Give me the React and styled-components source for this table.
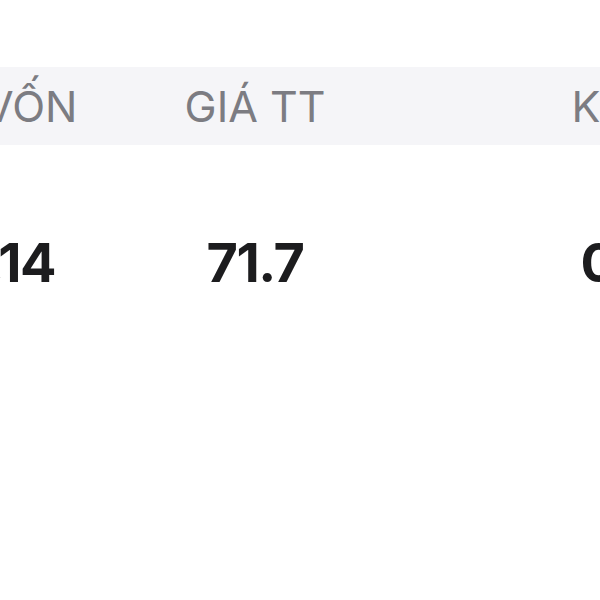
import React from "react";
import styled, { createGlobalStyle } from "styled-components";

const Global = createGlobalStyle`
  html, body { margin: 0; padding: 0; background: #ffffff; }
  body { font-family: Inter, "Noto Sans", sans-serif; }
`;

const Viewport = styled.div`
  width: 600px;
  height: 600px;
  overflow: hidden;
  background: #ffffff;
  padding-top: 67px;
  box-sizing: border-box;
`;

const Table = styled.div`
  margin-left: -152px;
  width: 966px;
  display: grid;
  grid-template-columns: 280px 254px 432px;
`;

const HeadCell = styled.div`
  background: #f5f5f8;
  height: 78px;
  display: flex;
  align-items: center;
  justify-content: center;
  font-size: 43px;
  font-weight: 400;
  color: #7c7c82;
  white-space: nowrap;
`;

const ValueCell = styled.div`
  height: 234px;
  display: flex;
  align-items: center;
  justify-content: center;
  font-size: 54px;
  font-weight: 700;
  color: #1c1c1e;
  letter-spacing: -1.5px;
  white-space: nowrap;
`;

const cols = [
  { head: "GIÁ VỐN", value: "69.14" },
  { head: "GIÁ TT", value: "71.7" },
  { head: "KL", value: "0" },
];

export default function App() {
  return (
    <>
      <Global />
      <Viewport>
        <Table>
          {cols.map((c) => (
            <HeadCell key={"h" + c.head}>{c.head}</HeadCell>
          ))}
          {cols.map((c) => (
            <ValueCell key={"v" + c.head}>{c.value}</ValueCell>
          ))}
        </Table>
      </Viewport>
    </>
  );
}
